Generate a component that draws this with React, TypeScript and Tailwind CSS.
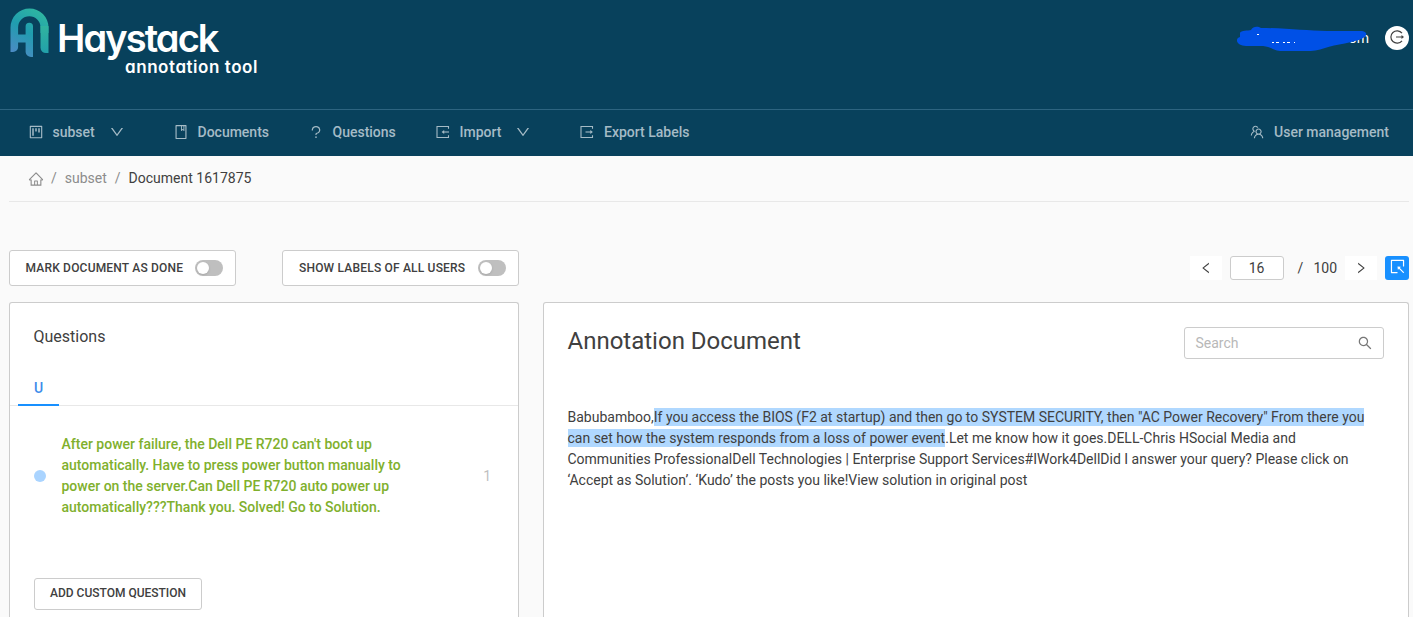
import React from "react";
import {
  AiOutlineProject, AiOutlineBook, AiOutlineQuestion, AiOutlineTeam,
  AiOutlineHome, AiOutlineSelect, AiOutlineSearch, AiOutlineDown, AiOutlineLeft, AiOutlineRight,
} from "react-icons/ai";

function LogoMark() {
  return (
    <svg width="40" height="50" viewBox="0 0 40 50" fill="none">
      <defs>
        <linearGradient id="mark" x1="34" y1="4" x2="6" y2="46" gradientUnits="userSpaceOnUse">
          <stop offset="0" stopColor="#2fb7a0" />
          <stop offset="0.5" stopColor="#209daf" />
          <stop offset="1" stopColor="#4b8bc4" />
        </linearGradient>
        <linearGradient id="leg" x1="0" y1="10" x2="0" y2="45" gradientUnits="userSpaceOnUse">
          <stop offset="0" stopColor="#35b99c" />
          <stop offset="1" stopColor="#22a0aa" />
        </linearGradient>
      </defs>
      <path
        fill="url(#mark)"
        d="M0.5 44V19.5a19 19 0 0 1 38 0V25H30.500V19.500a11.200 11.200 0 0 0-22.400 0V26.500h7.500V18.500a3.700 3.700 0 0 1 7.400 0V49h-2a5.400 5.400 0 0 1-5.400-5V34.500H8.100V39a5 5 0 0 1-5 5z"
      />
      <path fill="url(#leg)" d="M30.500 18H38.500V45H36a5.500 5.500 0 0 1-5.500-5.500z" />
    </svg>
  );
}

function TransferIcon({ out = false }: { out?: boolean }) {
  return (
    <svg width="14" height="14" viewBox="0 0 14 14" fill="none" stroke="currentColor" strokeWidth="1.100">
      <path d="M12.500 3.700V1.500H1V12.500H12.500V10.300" />
      {out ? <path d="M5.500 7H11" /> : <path d="M7.500 7H13" />}
      {out ? <path d="M10.300 5L12.900 7L10.300 9Z" fill="currentColor" stroke="none" /> : <path d="M8.200 5L5.600 7L8.200 9Z" fill="currentColor" stroke="none" />}
    </svg>
  );
}

function Toggle() {
  return (
    <span className="flex h-4 w-7 items-center rounded-full bg-[#bfbfbf] px-0.5">
      <span className="size-3 rounded-full bg-white shadow-sm" />
    </span>
  );
}

export default function App() {
  return (
    <div className="flex h-[617px] w-[1413px] flex-col overflow-hidden bg-[#fafafa] font-['Roboto',sans-serif] text-sm leading-[21px] text-[#404040]">
      <header className="flex h-[110px] shrink-0 justify-between border-b border-[#2d6480] bg-[#08415c] text-white">
        <div className="flex pt-2 pl-[10px]">
          <LogoMark />
          <div className="flex w-[208px] flex-col pl-[7px] font-['Inter',sans-serif] [font-feature-settings:'cv11','ss03']">
            <span className="pt-[12px] text-[38px] leading-[36px] font-semibold tracking-[-1.900px]">Haystack</span>
            <span className="mt-[2px] self-end text-[17px] leading-[18px] font-semibold tracking-[0.550px] whitespace-nowrap">annotation tool</span>
          </div>
        </div>
        <div className="flex items-center gap-4 self-start pt-[26px] pr-[4px]">
          <div className="relative flex h-6 w-[132px] items-center justify-end">
            <span>om</span>
            <svg className="absolute top-0 left-0" width="132" height="28" viewBox="0 0 132 28">
              <path fill="#0050e6" d="M3 7C4 4 11 5 14 4C16 0 21 0 24 2C50 2 70 5 90 5H125C131 6 130 10 126 12C118 17 98 18 88 22C78 26 70 25 58 25H45C37 25 35 21 26 20H9C0 20-3 13 3 11Z" />
              <path stroke="#fff" strokeWidth="1" strokeDasharray="2 2 3 4" d="M35 16.500H58M20 8.500h3" />
            </svg>
          </div>
          <span className="flex size-6 items-center justify-center rounded-full bg-white pr-px pb-[3px] text-[#404040]">
            <svg width="16" height="16" viewBox="0 0 16 16" fill="none" stroke="currentColor" strokeWidth="1.200">
              <path d="M13 4.200A6.200 6.200 0 1 0 13 11.800M7 8h6" />
              <path d="M12.500 6L15 8L12.500 10Z" fill="currentColor" stroke="none" />
            </svg>
          </span>
        </div>
      </header>

      <nav className="flex h-[46px] shrink-0 items-center bg-[#08415c] pr-6 pb-0.5 pl-[28px] font-medium text-[#a5bbc6]">
        <div className="flex w-[145px] items-center"><AiOutlineProject size={16} /><span className="ml-[8.500px]">subset</span><AiOutlineDown size={16} className="ml-[14px]" /></div>
        <div className="flex w-[135px] items-center"><AiOutlineBook size={16} /><span className="ml-[8.500px]">Documents</span></div>
        <div className="flex w-[128px] items-center"><AiOutlineQuestion size={16} /><span className="ml-[8.500px]">Questions</span></div>
        <div className="flex w-[144px] items-center"><TransferIcon /><span className="ml-[9.500px]">Import</span><AiOutlineDown size={16} className="ml-[13.500px]" /></div>
        <div className="flex items-center"><TransferIcon out /><span className="ml-[10px]">Export Labels</span></div>
        <div className="ml-auto flex items-center"><AiOutlineTeam size={16} /><span className="ml-[9px]">User management</span></div>
      </nav>

      <div className="mr-1 ml-[9px] flex h-[46px] shrink-0 items-center border-b border-[#e8e8e8] pl-[19px] text-[#8c8c8c]">
        <AiOutlineHome size={16} />
        <span className="mr-2 ml-[7px]">/</span><span>subset</span><span className="mx-2">/</span>
        <span className="text-[#404040]">Document 1617875</span>
      </div>

      <div className="mt-12 mr-1 ml-[9px] flex h-9 shrink-0 items-center">
        <div className="flex h-9 w-[227px] items-center justify-between rounded-[3px] border border-[#ccc] bg-white pr-3 pl-[15.500px] text-xs font-medium tracking-[0.190px]"><span>MARK DOCUMENT AS DONE</span><Toggle /></div>
        <div className="ml-[46px] flex h-9 w-[237px] items-center justify-between rounded-[3px] border border-[#ccc] bg-white pr-3 pl-4 text-xs font-medium tracking-[0.190px]"><span>SHOW LABELS OF ALL USERS</span><Toggle /></div>
        <div className="ml-auto flex items-center">
          <span className="flex h-6 w-8 items-center justify-center bg-white"><AiOutlineLeft size={14} /></span>
          <span className="ml-2 flex h-6 w-[54px] items-center justify-center rounded-[3px] border border-[#ccc] bg-white">16</span>
          <span className="ml-[14px]">/</span>
          <span className="ml-[10px]">100</span>
          <span className="ml-2 flex h-6 w-8 items-center justify-center bg-white"><AiOutlineRight size={14} /></span>
          <span className="ml-2 flex size-6 items-center justify-center rounded-[3px] bg-[#1890ff] pb-1 text-white"><AiOutlineSelect size={17} /></span>
        </div>
      </div>

      <main className="mt-4 mr-1 ml-[9px] flex flex-1 gap-6">
        <section className="w-[510px] shrink-0 rounded-t-[3px] border border-b-0 border-[#ccc] bg-white">
          <h2 className="pt-[22px] pl-[23.500px] text-base leading-6">Questions</h2>
          <div className="mt-[23px] flex h-[34px] border-b border-[#e8e8e8] pl-2">
            <span className="-mb-px h-[34px] w-[41px] border-b-2 border-[#1890ff] pt-[6px] text-center font-medium text-[#3d8bea]">U</span>
          </div>
          <div className="mt-7 flex items-center pl-6">
            <span className="size-3 rounded-full bg-[#aad4ff]" />
            <p className="ml-[15.500px] w-[345px] font-medium text-[#80b02d]">After power failure, the Dell PE R720 can't boot up automatically. Have to press power button manually to power on the server.Can Dell PE R720 auto power up automatically???Thank you. Solved! Go to Solution.</p>
            <span className="ml-auto pr-[27px] text-[#bfbfbf]">1</span>
          </div>
          <div className="mt-[60px] ml-6 flex h-8 w-[168px] items-center justify-center rounded-[3px] border border-[#ccc] pb-0.5 text-xs font-medium">ADD CUSTOM QUESTION</div>
        </section>
        <section className="flex-1 rounded-t-[3px] border border-b-0 border-[#ccc] bg-white pt-6 pr-6 pl-[23.500px]">
          <div className="flex h-8 items-center justify-between">
            <h1 className="pb-1 text-2xl">Annotation Document</h1>
            <div className="flex h-8 w-[200px] items-center justify-between rounded-[3px] border border-[#ccc] px-[10.500px] text-[#b8b8b8]"><span>Search</span><AiOutlineSearch size={16} className="text-[#777]" /></div>
          </div>
          <p className="mt-12 whitespace-nowrap">
            Babubamboo,<span className="bg-[#b0d8ff] py-px">If you access the BIOS (F2 at startup) and then go to SYSTEM SECURITY, then "AC Power Recovery" From there you<br />
            can set how the system responds from a loss of power event</span>.Let me know how it goes.DELL-Chris HSocial Media and<br />
            Communities ProfessionalDell Technologies | Enterprise Support Services#IWork4DellDid I answer your query? Please click on<br />
            ‘Accept as Solution’. ‘Kudo’ the posts you like!View solution in original post
          </p>
        </section>
      </main>
    </div>
  );
}
